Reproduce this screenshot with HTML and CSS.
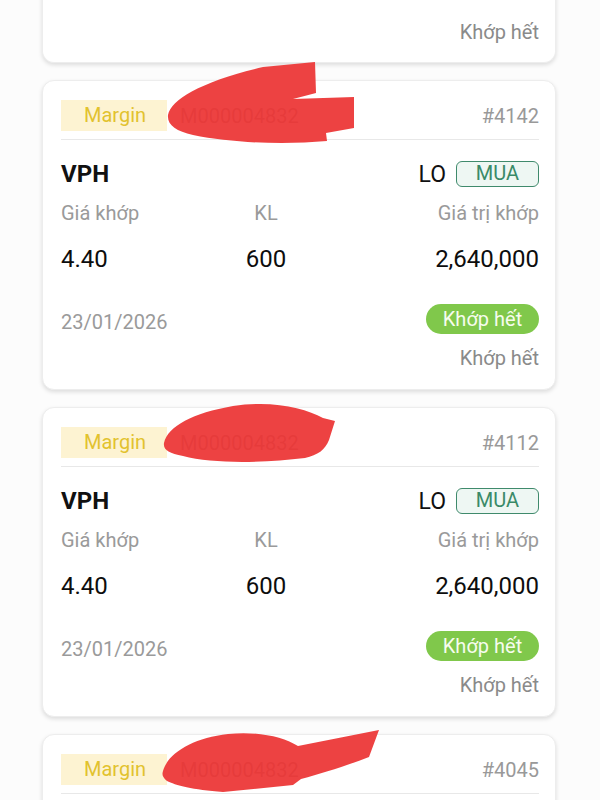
FILE: index.html
```html
<!DOCTYPE html>
<html lang="vi">
<head>
    <meta charset="UTF-8">
    <meta name="viewport" content="width=device-width, initial-scale=1.0">
    <title>Lệnh khớp</title>
    <link rel="stylesheet" href="styles.css">
</head>
<body>

    <div class="list">
        <!-- Lệnh trước, chỉ còn thấy phần cuối -->
        <div class="card card-tail">
            <div class="status">Khớp hết</div>
        </div>

        <div class="card">
            <div class="card-head">
                <span class="tag">Margin</span>
                <span class="acc">M000004832</span>
                <span class="hash">#4142</span>
            </div>
            <svg class="scribble" width="1" height="1" viewBox="0 0 1 1">
                <path d="M125,34 C128,18 160,0 220,-14 L272,-19 L273,12 L250,18 L311,16 L311,47 L283,52 L284,60 C240,64 190,62 150,54 C133,50 124,44 125,34 Z"/>
            </svg>
            <div class="sym-row">
                <span class="sym">VPH</span>
                <div class="side"><span class="type">LO</span><span class="buy">MUA</span></div>
            </div>
            <div class="cols labels"><span>Giá khớp</span><span>KL</span><span>Giá trị khớp</span></div>
            <div class="cols values"><span>4.40</span><span>600</span><span>2,640,000</span></div>
            <div class="foot">
                <span class="date">23/01/2026</span>
                <span class="pill">Khớp hết</span>
            </div>
            <div class="status">Khớp hết</div>
        </div>

        <div class="card">
            <div class="card-head">
                <span class="tag">Margin</span>
                <span class="acc">M000004832</span>
                <span class="hash">#4112</span>
            </div>
            <svg class="scribble" width="1" height="1" viewBox="0 0 1 1">
                <path d="M121,35 C125,18 150,5 190,-2 C230,-8 262,0 280,10 L292,13 L286,32 C282,42 275,47 262,50 C220,55 170,56 140,48 C126,45 120,42 121,35 Z"/>
            </svg>
            <div class="sym-row">
                <span class="sym">VPH</span>
                <div class="side"><span class="type">LO</span><span class="buy">MUA</span></div>
            </div>
            <div class="cols labels"><span>Giá khớp</span><span>KL</span><span>Giá trị khớp</span></div>
            <div class="cols values"><span>4.40</span><span>600</span><span>2,640,000</span></div>
            <div class="foot">
                <span class="date">23/01/2026</span>
                <span class="pill">Khớp hết</span>
            </div>
            <div class="status">Khớp hết</div>
        </div>

        <div class="card card-head-only">
            <div class="card-head">
                <span class="tag">Margin</span>
                <span class="acc">M000004832</span>
                <span class="hash">#4045</span>
            </div>
            <svg class="scribble" width="1" height="1" viewBox="0 0 1 1">
                <path d="M120,36 C125,18 150,3 185,-1 C215,-4 240,2 255,11 L336,-5 L326,22 C300,32 280,38 258,44 L250,50 L180,57 C150,55 132,50 124,46 C119,42 119,39 120,36 Z"/>
            </svg>
        </div>
    </div>

</body>
</html>
```

FILE: styles.css
```css
body {
    margin: 0;
    background-color: #fcfcfc;
    font-family: Roboto, "Noto Sans", sans-serif;
    overflow: hidden;
}
.list {
    margin-top: -10px;
    padding: 0 44px 0 42px;
    display: flex;
    flex-direction: column;
    gap: 17px;
}
.card {
    position: relative;
    height: 310px;
    box-sizing: border-box;
    padding: 19px 16px 0 18px;
    background-color: white;
    border: 1px solid #ededed;
    border-radius: 12px;
    box-shadow: 0 2px 4px rgba(0, 0, 0, 0.13);
}
.card-tail {
    height: 73px;
    padding-top: 30px;
    border-top: none;
    border-radius: 0 0 12px 12px;
}
.card-head-only {
    height: 120px;
}
.card-head {
    display: flex;
    align-items: center;
    gap: 13px;
    padding-bottom: 8px;
    border-bottom: 1px solid #e8e8e8;
    font-size: 20px;
}
.tag {
    height: 31px;
    line-height: 31px;
    padding: 0 21px 0 23px;
    background-color: #fdf3d2;
    color: #e2c22e;
}
.acc {
    color: #222;
}
.hash {
    margin-left: auto;
    color: #999;
}
.scribble {
    position: absolute;
    left: 0;
    top: 0;
    overflow: visible;
    fill: #ec3c3c;
    opacity: 0.97;
}
.sym-row {
    display: flex;
    justify-content: space-between;
    align-items: center;
    height: 34px;
    margin-top: 17px;
}
.sym {
    font-size: 24px;
    font-weight: bold;
    color: #111;
}
.side {
    display: flex;
    align-items: center;
    gap: 10px;
}
.type {
    font-size: 23px;
    color: #111;
}
.buy {
    width: 83px;
    height: 26px;
    box-sizing: border-box;
    line-height: 23px;
    text-align: center;
    border: 1.5px solid #3f8a6c;
    border-radius: 6px;
    background-color: #eef7f3;
    color: #3a8a68;
    font-size: 20px;
}
.cols {
    display: grid;
    grid-template-columns: 175px 60px 1fr;
}
.cols span:nth-child(2) {
    text-align: center;
}
.cols span:nth-child(3) {
    text-align: right;
}
.labels {
    margin-top: 10px;
    line-height: 24px;
    font-size: 20px;
    color: #9a9a9a;
}
.values {
    margin-top: 19px;
    line-height: 30px;
    font-size: 24px;
    color: #0d0d0d;
}
.foot {
    display: flex;
    justify-content: space-between;
    align-items: flex-end;
    margin-top: 30px;
}
.date {
    line-height: 24px;
    font-size: 20px;
    color: #9a9a9a;
}
.pill {
    width: 113px;
    height: 30px;
    line-height: 30px;
    text-align: center;
    border-radius: 15px;
    background-color: #80c84b;
    color: #f6fcee;
    font-size: 20px;
}
.status {
    margin-top: 12px;
    line-height: 24px;
    text-align: right;
    font-size: 20px;
    color: #8a8a8a;
}
.card-tail .status {
    margin-top: 0;
}
```
